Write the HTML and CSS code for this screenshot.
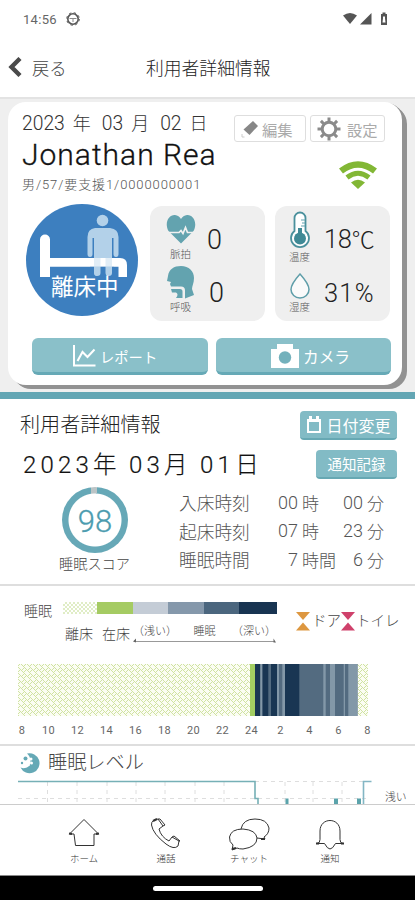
FILE: index.html
```html
<!DOCTYPE html>
<html lang="ja">
<head>
<meta charset="utf-8">
<meta name="viewport" content="width=device-width, initial-scale=1">
<title>利用者詳細情報</title>
<link rel="stylesheet" href="styles.css">
</head>
<body>
<div class="app">
  <div class="status">
    <span class="clock">14:56</span>
    <svg class="status-app" width="14" height="14" viewBox="0 0 14 14"><circle cx="7" cy="7" r="5.2" fill="none" stroke="#555" stroke-width="1.6"/><circle cx="7" cy="7" r="6.3" fill="none" stroke="#555" stroke-width="1" stroke-dasharray="2.4 2.55"/><path d="M3.500 6.500h7M7 6.500V10" stroke="#888" stroke-width="1"/></svg>
    <svg class="status-sys" width="46" height="14" viewBox="0 0 46 14"><path d="M0 3.5Q7 -1.5 14 3.5L7 12z" fill="#555"/><path d="M28.500 1v11.500H17z" fill="#555"/><path d="M38 2h1.500V.5h3V2H44v11h-6z" fill="#555"/><path d="M40 4.500h2v2l.5 4h-3l.5-4z" fill="#fff"/></svg>
  </div>
  <header class="header">
    <svg class="back-icon" width="14" height="20" viewBox="0 0 14 20"><path d="M12 1.500L3.500 10l8.500 8.500" fill="none" stroke="#4a4a4a" stroke-width="4.400"/></svg>
    <span class="back">戻る</span>
    <h1 class="title">利用者詳細情報</h1>
  </header>

  <section class="profile">
    <div class="card">
      <div class="intro">
        <div class="person">
          <div class="today"><span>2023</span><b>年</b><span>03</span><b>月</b><span>02</span><b>日</b></div>
          <div class="name">Jonathan Rea</div>
          <div class="meta">男/57/要支援1/0000000001</div>
        </div>
        <div class="tools">
          <div class="tool-row">
            <button class="tool edit"><svg width="18" height="18" viewBox="0 0 18 18"><path d="M12 1l5 5-8.500 9-6-5.500z" fill="#878787"/><path d="M1 14v3h2.500" fill="none" stroke="#ccc"/></svg><span>編集</span></button>
            <button class="tool setup"><svg width="24" height="24" viewBox="0 0 24 24"><circle cx="12" cy="12" r="6.800" fill="none" stroke="#8b8b8b" stroke-width="3"/><path d="M12 .5v4M12 19.500v4M.5 12h4M19.500 12h4M3.900 3.900l2.800 2.800M17.300 17.300l2.800 2.800M3.900 20.100l2.800-2.800M17.300 6.700l2.800-2.800" stroke="#8b8b8b" stroke-width="3"/></svg><span>設定</span></button>
          </div>
          <svg class="wifi" width="40" height="30" viewBox="0 0 40 30"><g fill="none" stroke="#82b735"><path d="M3 11Q20-2 37 11" stroke-width="6.500"/><path d="M9 17.500Q20 9 31 17.500" stroke-width="5"/></g><path d="M13 22.500q7-5.500 14 0l-7 6.500z" fill="#82b735"/></svg>
        </div>
      </div>

      <div class="vitals">
        <div class="bed">
          <svg width="112" height="112" viewBox="0 0 112 112"><circle cx="56" cy="56" r="56" fill="#3d7fbf"/><path d="M14 35.500a5 5 0 0 1 10 0V54h70q7 0 7 7v12h-8.500V62.500H24V73H14z" fill="#fff"/><g fill="#b3d1e9"><circle cx="76.500" cy="16.500" r="5.800"/><path d="M69 24h15q8.500 1 8.500 9v17q0 3-2.500 3t-2.500-3V34H86v35q0 3-3.200 3T79.500 69V54h-5v15q0 3-3.300 3T68 69V34h-1.500v16q0 3-2.500 3t-2.500-3V33q0-8 7.500-9z"/></g><path d="M24 54h40v8.500H24zM88 54h5v8.500h-5z" fill="#fff"/><path d="M64 54h24v8.500H64z" fill="#fff" opacity=".6"/></svg>
          <span class="bed-label">離床中</span>
        </div>
        <div class="panel">
          <div class="vital">
            <div class="sign"><svg width="30" height="30" viewBox="0 0 30 30"><path d="M15 29.500L2.500 17C-2 8.500 3 .5 9 1q4 .5 6 4 2-3.500 6-4c6-.5 11 7.500 6.500 16z" fill="#63a3af"/><path d="M1 18.500h12l2-2 2 3 2.500-6 2 5H29" fill="none" stroke="#f0f0f0" stroke-width="1.700"/></svg><small class="pulse">脈拍</small></div>
            <span class="value">0</span>
          </div>
          <div class="vital">
            <div class="sign"><svg width="30" height="34" viewBox="0 0 30 34"><path d="M2 11C3 4 8 1 15 1c8 0 13 5 13 12 0 5-2 8-2 11l2 6-9 3.500v-8q0-4-4-4H5l-1-2.500 1-2-4-1z" fill="#63a3af"/><path d="M5 24h9q2.500 0 2.500 2.500V33H10q3-4 0-5.500H6z" fill="#63a3af"/></svg><small>呼吸</small></div>
            <span class="value low">0</span>
          </div>
        </div>
        <div class="panel climate">
          <div class="vital">
            <div class="sign"><svg width="22" height="38" viewBox="0 0 22 38"><path d="M5.500 20V7a5.500 5.500 0 0 1 11 0v13a9 9 0 1 1-11 0z" fill="#fff" stroke="#4a909c" stroke-width="1.800"/><circle cx="11" cy="27.500" r="6" fill="#3f8995"/><path d="M11 17v10" stroke="#3f8995" stroke-width="4"/><path d="M12 9h4M13 12h3M12 15h4" stroke="#63a3af"/></svg><small>温度</small></div>
            <span class="value">18<b class="unit">℃</b></span>
          </div>
          <div class="vital">
            <div class="sign"><svg width="22" height="27" viewBox="0 0 22 27"><path d="M11 2Q2 12 2 17.500a9 8.500 0 0 0 18 0Q20 12 11 2z" fill="#fafafa" stroke="#5f9ea9" stroke-width="1.500"/></svg><small>湿度</small></div>
            <span class="value low">31%</span>
          </div>
        </div>
      </div>

      <div class="actions">
        <button class="action"><svg width="24" height="24" viewBox="0 0 24 24"><path d="M2 1v20.500h21.500M5.500 17l5-9 5 5 7-7.500" fill="none" stroke="#fff" stroke-width="2"/></svg><span>レポート</span></button>
        <button class="action camera"><svg width="30" height="26" viewBox="0 0 30 26"><path d="M1 6h6V1h16v5h6v19H1z" fill="#fff"/><circle cx="15" cy="14.500" r="6.200" fill="#73b1bc"/></svg><span>カメラ</span></button>
      </div>
    </div>
  </section>

  <section class="summary">
    <div class="summary-head">
      <div>
        <h2 class="sub">利用者詳細情報</h2>
        <div class="date"><span>2023</span><b>年</b><span>03</span><b>月</b><span>01</span><b>日</b></div>
      </div>
      <div class="side">
        <button class="chip"><svg width="16" height="18" viewBox="0 0 16 18"><path d="M2 4h12v12H2z" fill="none" stroke="#fff" stroke-width="2"/><path d="M1 3h14v3H1zM3 0h3v4H3zM10 0h3v4h-3z" fill="#fff"/></svg><span>日付変更</span></button>
        <button class="chip log"><span>通知記録</span></button>
      </div>
    </div>
    <div class="sleep">
      <div class="score">
        <div class="ring"><span>98</span></div>
        <div class="score-label">睡眠スコア</div>
      </div>
      <div class="times">
        <span>入床時刻</span><i>00</i><em>時</em><i>00</i><em>分</em>
        <span>起床時刻</span><i>07</i><em>時</em><i>23</i><em>分</em>
        <span>睡眠時間</span><i>7</i><em>時間</em><i>6</i><em>分</em>
      </div>
    </div>
  </section>

  <section class="timeline">
    <div class="legend">
      <span class="legend-name">睡眠</span>
      <div class="scale">
        <div class="swatches"><i class="out"></i><i class="in"></i><i class="l1"></i><i class="l2"></i><i class="l3"></i><i class="l4"></i></div>
        <div class="scale-labels">
          <span>離床</span><span class="inbed">在床</span>
          <div class="depth-wrap">
            <div class="depth"><span>（浅い）</span><span>睡眠</span><span>（深い）</span></div>
            <svg width="143" height="5" viewBox="0 0 143 5"><path d="M1 3.500h141" stroke="#999"/><path d="M0 3.500l3-3v4zM143 4.500l-2.500-4v4z" fill="#666"/></svg>
          </div>
        </div>
      </div>
      <div class="events">
        <svg width="14" height="19" viewBox="0 0 14 19"><path d="M0 0h14L7 8zM0 18.500h14l-7-8z" fill="#dd9740"/></svg><span class="door">ドア</span>
        <svg width="14" height="19" viewBox="0 0 14 19"><path d="M0 0h14L7 8zM0 18.500h14l-7-8z" fill="#cf416b"/></svg><span class="toilet">トイレ</span>
      </div>
    </div>
    <svg class="bars" width="350" height="52" viewBox="0 0 350 52">
      <defs><pattern id="weave" width="6" height="6" patternUnits="userSpaceOnUse"><rect width="6" height="6" fill="#fbfdf3"/><path d="M0 2l2-2M3 0l3 3M0 3l3 3M4 6l2-2" stroke="#d0e2a2" stroke-width="1"/></pattern></defs>
      <rect width="350" height="52" fill="url(#weave)"/>
      <rect x="232" width="5" height="52" fill="#a3ce62"/>
      <rect x="237" width="102.500" height="52" fill="#536b80"/>
      <path d="M237 0h5.300v52H237zM244.300 0h6v52h-6zM253 0h6v52h-6zM267 0h14.300v52H267z" fill="#193653"/>
      <path d="M242.300 0h2v52h-2zM259 0h2v52h-2zM264.300 0h2.700v52h-2.700zM305.300 0h2.400v52h-2.400zM312 0h5v52h-5zM325.700 0h1.300v52h-1.300zM330.300 0h9.200v52h-9.200z" fill="#8398a8"/>
    </svg>
    <div class="hours"><span class="first">8</span><span>10</span><span>12</span><span>14</span><span>16</span><span>18</span><span>20</span><span>22</span><span>24</span><span>2</span><span>4</span><span>6</span><span>8</span></div>
  </section>

  <section class="level">
    <div class="level-head">
      <svg width="22" height="22" viewBox="0 0 22 22"><path d="M8 1.500a10 10 0 1 1-6.500 14c5 2 10-1 10-6 0-4-1.500-6-3.500-8z" fill="#65a9b6"/><circle cx="6.500" cy="6.500" r="2" fill="#65a9b6"/><circle cx="3" cy="11" r="1.200" fill="#65a9b6"/><circle cx="9.500" cy="13" r="1.300" fill="#fff"/><circle cx="12" cy="7" r="1.500" fill="#fff"/><circle cx="12.500" cy="11" r="1.500" fill="#fff"/></svg>
      <h2>睡眠レベル</h2>
    </div>
    <div class="level-body">
      <svg width="354" height="25" viewBox="0 0 354 25">
        <path d="M0 18.500h352M237 1.500h115M29.500 2v23M59 2v23M89 2v23M118 2v23M147 2v23M177 2v23M206 2v23M267 2v23M295 2v23M324 2v23" fill="none" stroke="#dedede" stroke-dasharray="4 4"/>
        <path d="M0 1.500h237v17h3V25" fill="none" stroke="#76b0b6" stroke-width="1.600"/>
        <path d="M267.500 18.500h3V25h-3zM316 18.500h4V25h-4zM339 18.500h4V25h-4z" fill="#5ba3ab"/>
        <path d="M345.500 25V1.500h8" fill="none" stroke="#83b6c4" stroke-width="1.600"/>
      </svg>
      <span class="shallow">浅い</span>
    </div>
  </section>

  <nav class="nav">
    <a><svg width="32" height="34" viewBox="0 0 32 34"><path d="M1.500 17L16 2.500 30.500 17H26v11.500H7.500L6 17z"/><path d="M1 16.500l3 .5M28 17l3-.5" stroke-width="2"/></svg><span>ホーム</span></a>
    <a><svg width="32" height="34" viewBox="0 0 32 34"><path d="M4 3l4-1 5 7-4 3q2 8 10 12l3-4 7 4-1 5q-4 4-12-2Q3 17 1.500 8 1 5 4 3zM8 2l2 0 5 6-2 1M22 20l2-1 6 5-1 0"/><path d="M3 4l4-2" stroke-width="2"/></svg><span>通話</span></a>
    <a><svg width="42" height="34" viewBox="0 0 42 34"><path d="M5 28Q1 25 1.500 20 3 12 15 12q13 1 14 9 0 9-14 11-4 0-6-1l-5 2zM13 12Q15 2 27 2q12 0 14 9 0 6-5 9l1 2-8-1"/><path d="M4 32l4-1M33 22h4" stroke-width="2"/></svg><span>チャット</span></a>
    <a><svg width="28" height="34" viewBox="0 0 28 34"><path d="M1 26.500q3 0 3-4V14C4 0 24 0 24 14v8.500q0 4 3 4h-7.500Q16.500 32 14 32t-5.500-5.500z"/><path d="M0 26.500h3M25 26.500h3" stroke-width="2"/></svg><span>通知</span></a>
  </nav>
  <div class="gesture"><i></i></div>
</div>
</body>
</html>
```
FILE: styles.css
```css
* { box-sizing: border-box; margin: 0; padding: 0; }
body { background: #fff; font-family: Roboto, "Noto Sans CJK JP", sans-serif; font-weight: 300; color: #444; }
h1, h2, b, i, em, small { font-weight: 300; font-style: normal; }
button { border: 0; background: none; font: inherit; }
svg { display: block; flex: none; }
span { white-space: nowrap; }
.app { width: 415px; height: 900px; overflow: hidden; display: flex; flex-direction: column; }
.app > * { flex: none; }

.status { height: 38px; padding: 12px 26px 0 23px; display: flex; }
.clock { width: 43px; font-size: 13px; line-height: 15px; letter-spacing: .3px; font-weight: 400; color: #666; }
.status-sys { margin-left: auto; }
.header { height: 61px; display: flex; align-items: center; padding: 0 0 1px 8px; border-bottom: 2px solid #e3e3e3; }
.back { width: 107px; margin-left: 10px; font-size: 17.300px; }
.title { margin-left: 7px; font-size: 17.800px; color: #222; white-space: nowrap; }

.profile { height: 300px; padding: 3px 13px 0 8px; background: #efefef; border-bottom: 7px solid #63a6b4; }
.card { height: 283px; background: #fff; border-radius: 18px; box-shadow: 2px 1px #929292, 4px 3px #929292, 5px 4px #929292; padding: 9px 11px 0 14px; }
.intro { height: 93px; display: flex; }
.person { width: 212px; }
.today { height: 25px; line-height: 25px; display: flex; font-size: 19.300px; color: #333; }
.today b { width: 18px; margin: 0 11px 0 8px; font-size: 18px; }
.name { height: 37px; margin-top: 0; line-height: 37px; font-size: 30px; letter-spacing: 1px; color: #111; font-weight: 300; -webkit-text-stroke: .3px #111; white-space: nowrap; }
.meta { height: 20px; margin-top: 2px; line-height: 20px; font-size: 13px; letter-spacing: .9px; color: #555; }
.tools { flex: 1; }
.tool-row { display: flex; gap: 4px; margin-top: 4px; }
.tool { height: 27px; border: 1px solid #dedede; border-radius: 3px; display: flex; align-items: center; font-size: 15.300px; font-weight: 400; color: #aaa; }
.edit { width: 72px; padding-left: 6px; gap: 3px; }
.setup { width: 75px; padding-left: 6px; gap: 6px; }
.wifi { margin: 18px 0 0 104px; }

.vitals { height: 117px; display: flex; padding-left: 4px; }
.bed { width: 112px; height: 112px; position: relative; }
.bed-label { position: absolute; left: 25px; top: 68px; color: #fff; font-size: 22.500px; line-height: 30px; font-weight: 400; }
.panel { width: 115px; height: 115px; margin: 2px 0 0 12px; background: #efefef; border-radius: 12px; padding: 8px 0 0 15px; display: flex; flex-direction: column; }
.panel.climate { margin-left: 10px; padding: 5px 0 0 10px; }
.vital { display: flex; }
.sign { width: 31px; display: flex; flex-direction: column; align-items: center; }
.sign small { font-size: 10.500px; line-height: 16px; height: 17px; color: #555; margin-top: 1px; }
.sign .pulse { margin-top: 3px; }
.panel .vital:first-child { height: 51px; }
.climate .vital:first-child { height: 61px; }
.value { margin: 10px 0 0 11px; font-size: 27px; line-height: 32px; color: #222; }
.value.low { margin: 12px 0 0 13px; }
.climate .sign { width: 29px; }
.climate .value { margin: 12px 0 0 10px; font-size: 25.500px; letter-spacing: -.3px; }
.climate .unit { font-size: 23px; }
.climate .value.low { margin: 5px 0 0 10px; letter-spacing: 1.2px; }

.actions { display: flex; gap: 8px; margin: 17px 0 0 10px; }
.action { width: 176px; height: 37px; border-radius: 6px; background: #8ac0c9; border-bottom: 3px solid #66a9b6; color: #fff; font-weight: 400; display: flex; align-items: center; padding: 2px 0 0 40px; gap: 4px; }
.action span { font-size: 14.300px; }
.action.camera { width: 175px; padding-left: 54px; gap: 3px; }
.action.camera span { font-size: 15.700px; }

.summary { height: 187px; border-bottom: 2px solid #dedede; }
.summary-head { height: 87px; display: flex; justify-content: space-between; padding: 12px 18px 0 20px; }
.sub { height: 28px; line-height: 28px; font-size: 20.100px; color: #222; }
.date { display: flex; height: 38px; margin: 7px 0 0 3px; line-height: 38px; font-size: 24px; color: #111; -webkit-text-stroke: .2px #111; }
.date span { letter-spacing: 4.200px; }
.date b { width: 24px; margin-right: 12px; font-size: 23.500px; }
.side { display: flex; flex-direction: column; align-items: flex-end; gap: 10px; }
.chip { height: 29px; width: 97px; border-radius: 4px; background: #82bbc5; border-bottom: 2px solid #67a8b3; color: #fff; font-size: 16px; font-weight: 400; display: flex; align-items: center; justify-content: center; gap: 4px; }
.chip.log { width: 81px; font-size: 14.500px; }
.sleep { display: flex; }
.score { width: 134px; padding-left: 56px; }
.ring { width: 66px; height: 66px; margin: 1px 0 0 6px; border-radius: 50%; display: flex; align-items: center; justify-content: center; background: radial-gradient(circle, #fff 26px, transparent 27px), conic-gradient(from -4deg, #bbc4c6 0 2%, #66a8b7 2% 99%, #bbc4c6 99%); font-size: 31px; color: #4c9caf; }
.ring span { padding-top: 2px; -webkit-text-stroke: .3px #4c9caf; }
.score-label { width: 74px; margin: 0 0 0 3px; line-height: 22px; font-size: 14.200px; white-space: nowrap; }
.times { margin: 2px 0 0 45px; display: grid; grid-template-columns: 72px 47px 45px 20px 24px; grid-auto-rows: 28.500px; align-items: center; font-size: 17.700px; color: #555; }
.times i { text-align: right; font-size: 18px; }
.times em { padding-left: 4px; font-size: 17px; white-space: nowrap; }

.timeline { height: 160px; border-bottom: 2px solid #dedede; }
.legend { height: 78px; display: flex; padding: 16px 0 0 24px; }
.legend-name { width: 39px; font-size: 14px; line-height: 18px; }
.scale { width: 214px; }
.swatches { display: grid; grid-template-columns: 34px 36px 35px 36px 35px 38px; height: 12px; }
.out { background: repeating-conic-gradient(#e0edc6 0 25%, #fff 0 50%) 0 0 / 4px 4px; }
.in { background: #a5cb63; }
.l1 { background: #c4ccd6; }
.l2 { background: #8598ab; }
.l3 { background: #4b667e; }
.l4 { background: #183451; }
.scale-labels { display: flex; padding: 9px 0 0 2px; font-size: 14px; line-height: 22px; }
.inbed { margin-left: 9px; }
.depth-wrap { width: 143px; margin-left: 3px; }
.depth { height: 15px; display: flex; justify-content: space-between; font-size: 11px; line-height: 18px; }
.events { display: flex; margin: 10px 0 0 19px; font-size: 14.500px; line-height: 19px; }
.door { width: 29px; margin-left: 2px; }
.toilet { margin-left: 1px; }
.bars { margin-left: 18px; }
.hours { display: grid; grid-template-columns: repeat(13, 29px); margin: 6px 0 0 5px; text-align: center; font-size: 11px; line-height: 17px; letter-spacing: .2px; font-weight: 400; color: #666; }
.first { padding-left: 5px; }

.level { height: 59px; border-bottom: 1px solid #ccc; overflow: hidden; }
.level-head { height: 34px; display: flex; align-items: center; padding-left: 19px; gap: 7px; }
.level-head h2 { font-size: 19.200px; line-height: 28px; color: #444; }
.level-body { display: flex; padding-left: 18px; }
.shallow { margin: 11px 0 0 13px; font-size: 10.800px; line-height: 14px; height: 13px; }

.nav { height: 71px; display: grid; grid-template-columns: 82px 82px 84px 78px; justify-content: start; padding: 12px 0 0 43px; border-bottom: 1px solid #888; }
.nav a { display: flex; flex-direction: column; align-items: center; font-size: 9.500px; line-height: 16px; color: #333; }
.nav svg { fill: none; stroke: #333; stroke-width: 1; }
.gesture { height: 24px; background: #000; display: flex; justify-content: center; padding: 10px 0 0 1px; }
.gesture i { width: 110px; height: 5px; border-radius: 3px; background: #fff; }
```
